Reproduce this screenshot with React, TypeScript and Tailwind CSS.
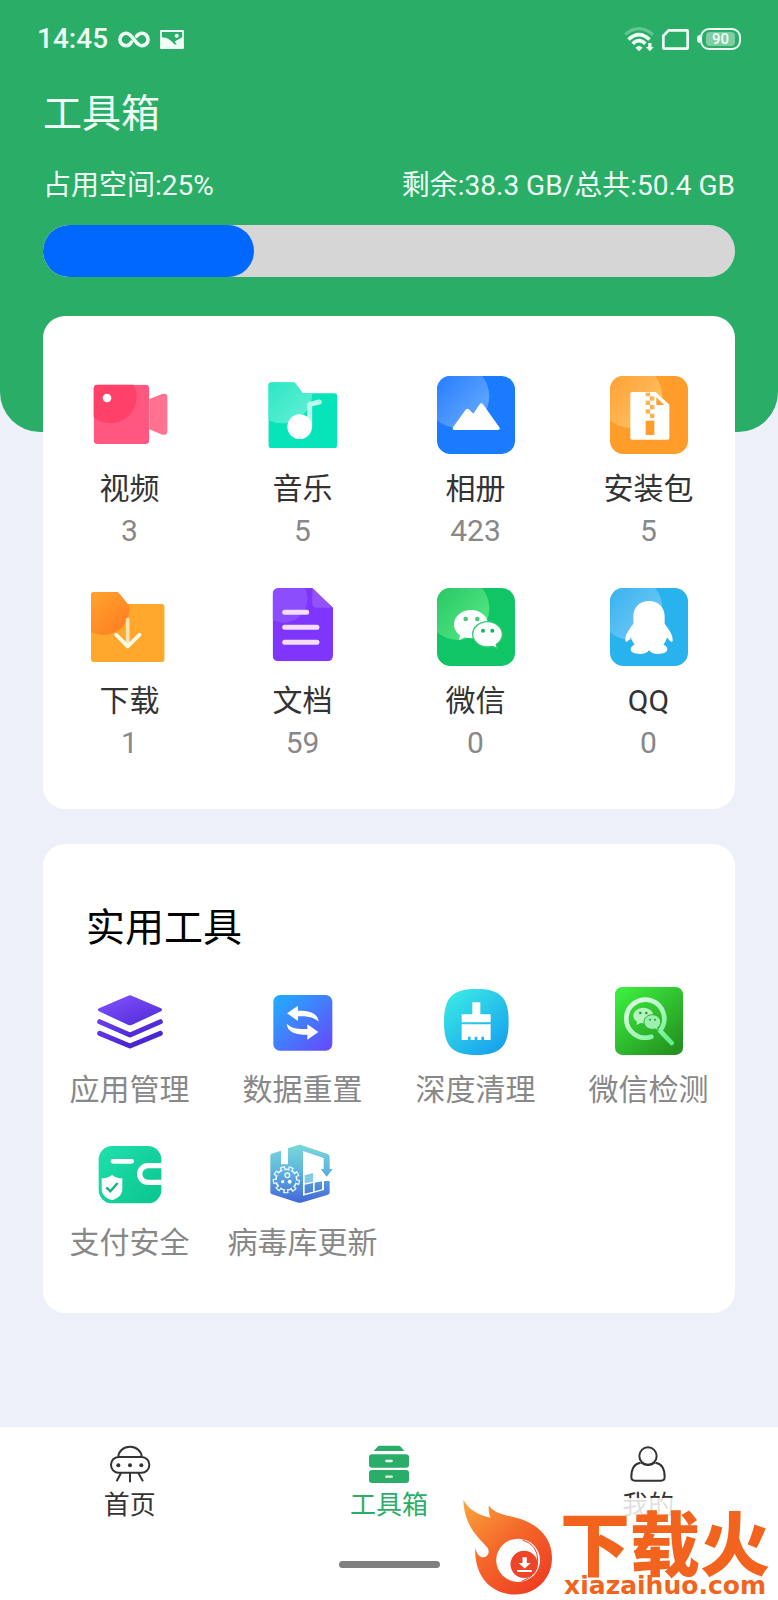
import type { ReactNode } from 'react'

function InfinityIcon() {
  return (
    <svg viewBox="0 0 96 52" className="w-8 h-[17px]" fill="none" stroke="currentColor" strokeWidth="11" strokeLinecap="round">
      <path d="M40 34C36 41 31 45 24 45a19 19 0 0 1 0-38C44 7 52 45 72 45a19 19 0 0 0 0-38c-7 0-12 4-16 9" />
    </svg>
  )
}

function ScreenshotIcon() {
  return (
    <svg viewBox="0 0 70 56" className="w-6 h-[19px]">
      <path
        fill="currentColor"
        fillRule="evenodd"
        d="M3 0h64q3 0 3 3v50q0 3-3 3H3q-3 0-3-3V3Q0 0 3 0ZM5 6v15c15 0 27 8 38 22l6 0-6-9 22-13V6ZM49 11a6 6 0 1 1 0 12 6 6 0 0 1 0-12Z"
      />
    </svg>
  )
}

function WifiIcon() {
  return (
    <svg viewBox="0 0 90 76" className="w-[30px] h-[25px]" fill="none" stroke="currentColor">
      <path d="M3 23Q45-13 87 23" strokeWidth="9" opacity=".3" />
      <path d="M13 38Q45 8 77 38" strokeWidth="11" />
      <path d="M26 51Q45 32 64 51" strokeWidth="11" />
      <path d="M34 63q11-10 22 0L45 74Z" fill="currentColor" stroke="none" />
      <path d="M73 49h10v12h7L78 74 66 61h7Z" fill="currentColor" stroke="none" />
    </svg>
  )
}

function SimIcon() {
  return (
    <svg viewBox="0 0 80 62" className="w-[27px] h-[21px]" fill="none" stroke="currentColor" strokeWidth="8">
      <path d="M20 4h54q2 0 2 2v50q0 2-2 2H6q-2 0-2-2V20Z" />
    </svg>
  )
}

function Battery({ level }: { level: number }) {
  return (
    <div className="flex items-center">
      <div className="w-[3px] h-2 rounded-l-full bg-current" />
      <div className="flex w-[41px] h-[22px] px-1 py-0.5 rounded-[9px] border-2 border-current">
        <div className="flex flex-1 items-center justify-center rounded-sm bg-white/40 text-[15px] leading-none font-medium">
          {level}
        </div>
      </div>
    </div>
  )
}

function VideoIcon() {
  return (
    <svg viewBox="0 0 234 234" className="size-[78px]">
      <clipPath id="video-body">
        <rect x="8" y="26" width="167" height="178" rx="12" />
      </clipPath>
      <path d="M175 69 214 54q15-3 15 9v103q0 13-15 10l-39-16Z" fill="#ff7290" />
      <g clipPath="url(#video-body)">
        <rect x="8" y="26" width="167" height="178" fill="#ff5780" />
        <circle cx="58" cy="63" r="79" fill="#ff4169" />
      </g>
      <circle cx="48" cy="66" r="13" fill="#fff" />
    </svg>
  )
}

function MusicIcon() {
  return (
    <svg viewBox="0 0 234 234" className="size-[78px]">
      <defs>
        <linearGradient id="music-glow" x1="0" y1="0" x2="1" y2="1">
          <stop offset=".2" stopColor="#22e5c0" />
          <stop offset="1" stopColor="#68f0d8" />
        </linearGradient>
        <clipPath id="music-folder">
          <path d="M23 19h65q4 0 7 4l21 29h94q10 0 10 10v144q0 10-10 10H23q-10 0-10-10V29q0-10 10-10Z" />
        </clipPath>
      </defs>
      <g clipPath="url(#music-folder)">
        <rect width="234" height="234" fill="#08e4b9" />
        <circle cx="54" cy="51" r="91" fill="url(#music-glow)" />
      </g>
      <path d="M137 150V85l29-7" fill="none" stroke="#b9f8eb" strokeWidth="15" strokeLinecap="round" strokeLinejoin="round" />
      <circle cx="107" cy="152" r="37" fill="#fff" />
    </svg>
  )
}

type TileProps = { id: string; base: string; from: string; to: string; children: ReactNode }

// Rounded app tile with the light disc in its upper left corner
function Tile({ id, base, from, to, children }: TileProps) {
  return (
    <svg viewBox="0 0 234 234" className="size-[78px]">
      <defs>
        <linearGradient id={`${id}-glow`} x1="0" y1="0.1" x2="0.9" y2="0.9">
          <stop offset=".25" stopColor={from} />
          <stop offset="1" stopColor={to} />
        </linearGradient>
        <clipPath id={`${id}-tile`}>
          <rect width="234" height="234" rx="40" />
        </clipPath>
      </defs>
      <g clipPath={`url(#${id}-tile)`}>
        <rect width="234" height="234" fill={base} />
        <circle cx="62" cy="61" r="95" fill={`url(#${id}-glow)`} />
      </g>
      {children}
    </svg>
  )
}

function AlbumIcon() {
  return (
    <Tile id="album" base="#1b7bff" from="#2e82ff" to="#64aaff">
      <path
        d="M48 154 86 101q5-6 11 0l12 12 18-27q6-8 12 0l48 68q4 8-5 8H53q-9 0-5-8Z"
        fill="#fff"
      />
    </Tile>
  )
}

function PackageIcon() {
  return (
    <Tile id="package" base="#ff9d2a" from="#ffa43a" to="#ffc468">
      <path d="M67 48h70l41 38v99q0 6-6 6H67q-6 0-6-6V54q0-6 6-6Z" fill="#fff" />
      <path d="M139 64v23h24Z" fill="#ffa035" />
      <g fill="#ffb14d">
        <rect x="107" y="50" width="13" height="11" />
        <rect x="120" y="61" width="13" height="13" />
        <rect x="107" y="74" width="13" height="13" />
        <rect x="120" y="87" width="13" height="13" />
        <rect x="107" y="100" width="13" height="13" />
        <rect x="120" y="113" width="13" height="13" />
      </g>
      <rect x="107" y="134" width="26" height="43" fill="#ff9d2a" />
    </Tile>
  )
}

function DownloadIcon() {
  return (
    <svg viewBox="0 0 234 234" className="size-[78px]">
      <defs>
        <linearGradient id="download-glow" x1="0.2" y1="0.1" x2="0.9" y2="0.9">
          <stop offset=".2" stopColor="#ff9f2c" />
          <stop offset="1" stopColor="#ff7f22" />
        </linearGradient>
        <clipPath id="download-folder">
          <path d="M10 12h66q5 0 8 4l26 32h101q10 0 10 10v154q0 10-10 10H10q-10 0-10-10V22q0-10 10-10Z" />
        </clipPath>
      </defs>
      <g clipPath="url(#download-folder)">
        <rect width="234" height="234" fill="#ffa82b" />
        <circle cx="37" cy="63" r="78" fill="url(#download-glow)" />
      </g>
      <g fill="none" strokeWidth="11" strokeLinecap="round" strokeLinejoin="round">
        <path d="M110 95v76" stroke="#ffe3b5" />
        <path d="m75 140 35 35 36-35" stroke="#fffbe8" />
      </g>
    </svg>
  )
}

function DocumentIcon() {
  return (
    <svg viewBox="0 0 234 234" className="size-[78px]">
      <clipPath id="doc-page">
        <path d="M46 0h99l62 59v141q0 20-20 20H46q-20 0-20-20V20Q26 0 46 0Z" />
      </clipPath>
      <g clipPath="url(#doc-page)">
        <rect width="234" height="234" fill="#7f35fb" />
        <circle cx="58" cy="32" r="72" fill="#8c4dfc" />
        <path d="M145 0v45q0 14 14 14h48Z" fill="#9452fb" />
      </g>
      <path d="M62 73h66M62 118h97M62 163h97" stroke="#f4dcff" strokeWidth="15" strokeLinecap="round" />
    </svg>
  )
}

function WechatIcon() {
  return (
    <Tile id="wechat" base="#0fc565" from="#2dcc69" to="#55e684">
      <path d="M102 66c-28 0-51 19-51 43 0 13 7 25 18 33l-3 15 18-9c6 2 12 3 18 3 28 0 51-18 51-42s-23-43-51-43Z" fill="#fff" />
      <circle cx="86" cy="93" r="7" fill="#3fcb78" />
      <circle cx="121" cy="93" r="7" fill="#3fcb78" />
      <path
        d="M152 101c-25 0-45 17-45 38s20 38 45 38c5 0 10-1 15-2l14 7-3-13c11-7 18-17 18-30 0-21-20-38-44-38Z"
        fill="#fff"
        stroke="#2fcb70"
        strokeWidth="4"
      />
      <circle cx="138" cy="128" r="6" fill="#0fb85d" />
      <circle cx="166" cy="128" r="6" fill="#0fb85d" />
    </Tile>
  )
}

function QQIcon() {
  return (
    <Tile id="qq" base="#29b3ee" from="#3fb5f0" to="#74cbf5">
      <path
        d="M117 39c-29 0-47 20-47 46v22c-14 19-25 35-24 50 1 9 7 5 17-9 2 9 6 16 11 22-8 3-12 8-12 14 0 9 12 14 28 14 13 0 23-4 27-11 4 7 14 11 27 11 16 0 28-5 28-14 0-6-4-11-12-14 5-6 9-13 11-22 10 14 16 18 17 9 1-15-10-31-24-50V85c0-26-18-46-47-46Z"
        fill="#fff"
      />
    </Tile>
  )
}

function LayersIcon() {
  return (
    <svg viewBox="0 0 204 204" className="size-[68px]">
      <defs>
        <linearGradient id="layers" x1="0" y1="25" x2="60" y2="183" gradientUnits="userSpaceOnUse">
          <stop offset="0" stopColor="#8354ff" />
          <stop offset="1" stopColor="#4b25d2" />
        </linearGradient>
      </defs>
      <path d="M97 26q5-2 10 0l88 38q6 4 0 9l-88 41q-5 2-10 0L9 73q-7-5 0-9Z" fill="url(#layers)" />
      <path
        d="m11 104 91 40 91-40M11 139l91 38 91-38"
        fill="none"
        stroke="url(#layers)"
        strokeWidth="15"
        strokeLinecap="round"
        strokeLinejoin="round"
      />
    </svg>
  )
}

function ResetIcon() {
  return (
    <svg viewBox="0 0 204 204" className="size-[68px]">
      <defs>
        <linearGradient id="reset" x1="0" y1="0" x2="1" y2="1">
          <stop offset=".1" stopColor="#25a6ff" />
          <stop offset=".9" stopColor="#6250fb" />
        </linearGradient>
      </defs>
      <rect x="13" y="24" width="177" height="167" rx="20" fill="url(#reset)" />
      <path id="reset-arrow" d="m54 79 33-23v15c36 0 59 7 62 33-14-13-31-17-62-16v14Z" fill="#fff" />
      <use href="#reset-arrow" transform="rotate(180 101 107)" />
    </svg>
  )
}

function CleanIcon() {
  return (
    <svg viewBox="0 0 204 204" className="size-[68px]">
      <defs>
        <linearGradient id="clean" x1="0" y1="0" x2=".8" y2="1">
          <stop offset="0" stopColor="#3bf0e4" />
          <stop offset="1" stopColor="#18a0ee" />
        </linearGradient>
      </defs>
      <path d="M103 6c72 0 97 25 97 99s-25 99-97 99S6 179 6 105 31 6 103 6Z" fill="url(#clean)" />
      <path d="M91 46h24v36h31v24H59V82h32Z" fill="#fff" />
      <path d="M59 112h87v47h-20v-10h-8v10h-12v-10h-8v10H86v-10h-8v10H59Z" fill="#fff" />
    </svg>
  )
}

function WechatScanIcon() {
  return (
    <svg viewBox="0 0 204 204" className="size-[68px]">
      <defs>
        <linearGradient id="scan" x1="0" y1="0" x2=".8" y2="1">
          <stop offset=".1" stopColor="#3bea3e" />
          <stop offset="1" stopColor="#259220" />
        </linearGradient>
        <linearGradient id="scan-ring" x1="0" y1="0" x2="1" y2="1">
          <stop offset=".2" stopColor="#d3fbd9" />
          <stop offset="1" stopColor="#5cf087" />
        </linearGradient>
      </defs>
      <rect width="204" height="204" rx="22" fill="url(#scan)" />
      <path
        d="M109 149a57 57 0 1 1 26-18l35 37"
        fill="none"
        stroke="url(#scan-ring)"
        strokeWidth="14"
        strokeLinecap="round"
        strokeLinejoin="round"
      />
      <path d="M85 62c-17 0-30 11-30 24 0 8 4 14 11 18l-2 10 12-6 9 1c17 0 30-10 30-23S102 62 85 62Z" fill="#b5f3bf" />
      <path
        d="M112 83c-14 0-25 10-25 22s11 22 25 22l8-1 10 5-2-9c6-4 9-10 9-17 0-12-11-22-25-22Z"
        fill="#9cf0ae"
        stroke="#2fb32f"
        strokeWidth="3"
      />
      <g fill="#2a9c2a">
        <circle cx="76" cy="78" r="4" />
        <circle cx="94" cy="78" r="4" />
        <circle cx="105" cy="98" r="3" />
        <circle cx="120" cy="98" r="3" />
      </g>
    </svg>
  )
}

function PayIcon() {
  return (
    <svg viewBox="0 0 204 204" className="size-[68px]">
      <defs>
        <linearGradient id="pay" x1="0" y1="0" x2="1" y2="1">
          <stop offset="0" stopColor="#1fe0ac" />
          <stop offset="1" stopColor="#0bc48e" />
        </linearGradient>
      </defs>
      <rect x="8" y="18" width="188" height="172" rx="40" fill="url(#pay)" />
      <path d="M51 64h56" stroke="#fff" strokeWidth="14" strokeLinecap="round" />
      <path d="M204 77h-48a25 25 0 0 0 0 50h48" fill="none" stroke="#fff" strokeWidth="16" />
      <path d="M48 104c9 8 19 11 31 11v32c0 18-14 28-31 34-17-6-31-16-31-34v-32c12 0 22-3 31-11Z" fill="#fff" />
      <path d="m31 142 12 12 22-25" fill="none" stroke="#12b386" strokeWidth="7" />
    </svg>
  )
}

function VirusIcon() {
  return (
    <svg viewBox="0 0 204 204" className="size-[68px]">
      <defs>
        <linearGradient id="virus" x1="0" y1="14" x2="0" y2="190" gradientUnits="userSpaceOnUse">
          <stop offset="0" stopColor="#79d9d8" />
          <stop offset=".45" stopColor="#5fb4de" />
          <stop offset="1" stopColor="#4264d8" />
        </linearGradient>
      </defs>
      <path
        d="M8 41 36 32v41h21V25l31-10q4-2 8 0l80 27q6 2 6 8v37h9l-18 23-18-23h9V54l-62-21v134l63-17v-27h17v34q0 5-5 7l-81 24q-4 1-8 0L9 163q-5-2-5-7V47q0-5 4-6Z"
        fill="url(#virus)"
      />
      <path d="m107 106 25-7v26l-25 5Z" fill="#83cbe2" />
      <path d="m107 134 25-5v26l-25 6ZM137 128l22-4v24l-22 6Z" fill="url(#virus)" />
      <g fill="none" stroke="#f0fbff">
        <circle cx="52" cy="119" r="30" strokeWidth="7" />
        <circle cx="52" cy="119" r="36" strokeWidth="10" strokeDasharray="15 10" />
      </g>
      <circle cx="52" cy="119" r="29" fill="url(#virus)" />
      <circle
        cx="52"
        cy="119"
        r="33"
        fill="none"
        stroke="url(#virus)"
        strokeWidth="9"
        strokeDasharray="7 16"
        strokeDashoffset="-3"
      />
      <circle cx="55" cy="106" r="7" fill="none" stroke="#f0fbff" strokeWidth="4" />
      <circle cx="41" cy="125" r="5" fill="#f0fbff" />
      <circle cx="62" cy="125" r="6" fill="#f0fbff" />
    </svg>
  )
}

function HomeIcon() {
  return (
    <svg viewBox="0 0 126 114" className="w-[42px] h-[38px]" fill="none" stroke="currentColor" strokeWidth="6">
      <path d="M28 36a35 31 0 0 1 70 0" />
      <rect x="6" y="36" width="115" height="47" rx="23" />
      <path d="M36 84 23 109M63 84v28M88 84l14 25" />
      <g fill="currentColor" stroke="none">
        <circle cx="28" cy="61" r="6" />
        <circle cx="63" cy="61" r="6" />
        <circle cx="97" cy="61" r="6" />
      </g>
    </svg>
  )
}

function ToolboxIcon() {
  return (
    <svg viewBox="0 0 126 114" className="w-[42px] h-[38px]" fill="currentColor">
      <path d="M34 2h58q4 0 7 4l10 12H17L28 6q3-4 6-4Z" />
      <rect x="3" y="28" width="120" height="40" rx="9" />
      <rect x="3" y="75" width="120" height="39" rx="9" />
      <path d="M55 48h16M55 95h16" stroke="#eafff0" strokeWidth="7" strokeLinecap="round" />
    </svg>
  )
}

function UserIcon() {
  return (
    <svg viewBox="0 0 126 114" className="w-[42px] h-[38px]" fill="none" stroke="currentColor" strokeWidth="6">
      <circle cx="63" cy="33" r="26" />
      <path d="M41 53C21 56 13 72 13 96q0 11 11 11h78q11 0 11-11c0-24-8-40-28-43" />
      <path d="M43 53q20 14 40 0" />
    </svg>
  )
}

function FlameLogo() {
  return (
    <svg viewBox="60 235 280 300" className="w-[93px] h-[100px] shrink-0">
      <defs>
        <linearGradient id="flame" x1="0" y1="0" x2=".8" y2="1">
          <stop offset="0" stopColor="#fba53c" />
          <stop offset=".5" stopColor="#f4682a" />
          <stop offset="1" stopColor="#ef3d22" />
        </linearGradient>
      </defs>
      <path
        d="M67 240c14 28 42 45 82 54-5-12-7-24-5-37 15 22 42 28 79 36 70 17 111 62 111 122 0 62-48 110-111 110-78 0-124-62-120-140 4 17 13 28 24 28 13 0 21-15 13-29C120 360 70 325 67 240Z"
        fill="url(#flame)"
      />
      <ellipse cx="232" cy="422" rx="66" ry="65" fill="#fff" />
      <path d="M245 361q46 14 46 61t-48 63" fill="none" stroke="#ee4529" strokeWidth="3" />
      <circle cx="250" cy="434" r="41" fill="#ee4427" />
      <path d="M245 413h13v17h12l-18 17-19-17h12ZM229 451h44v6h-44Z" fill="#fff" />
    </svg>
  )
}

const categories = [
  { name: '视频', count: 3, icon: <VideoIcon /> },
  { name: '音乐', count: 5, icon: <MusicIcon /> },
  { name: '相册', count: 423, icon: <AlbumIcon /> },
  { name: '安装包', count: 5, icon: <PackageIcon /> },
  { name: '下载', count: 1, icon: <DownloadIcon /> },
  { name: '文档', count: 59, icon: <DocumentIcon /> },
  { name: '微信', count: 0, icon: <WechatIcon /> },
  { name: 'QQ', count: 0, icon: <QQIcon /> },
]

const tools = [
  { name: '应用管理', icon: <LayersIcon /> },
  { name: '数据重置', icon: <ResetIcon /> },
  { name: '深度清理', icon: <CleanIcon /> },
  { name: '微信检测', icon: <WechatScanIcon /> },
  { name: '支付安全', icon: <PayIcon /> },
  { name: '病毒库更新', icon: <VirusIcon /> },
]

const tabs = [
  { name: '首页', icon: <HomeIcon />, active: false },
  { name: '工具箱', icon: <ToolboxIcon />, active: true },
  { name: '我的', icon: <UserIcon />, active: false },
]

export default function App() {
  return (
    <div className="flex flex-col min-h-screen bg-[#edf0f9] font-[Roboto,'Noto_Sans_CJK_SC',sans-serif] text-[#333]">
      <header className="rounded-b-[40px] bg-[#2aae67] px-[43px] pb-[155px] text-[#f0fff6]">
        <div className="-mx-1.5 flex h-[78px] items-center justify-between">
          <div className="flex items-center gap-2.5">
            <span className="text-[28px] leading-none font-medium">14:45</span>
            <InfinityIcon />
            <ScreenshotIcon />
          </div>
          <div className="flex items-center gap-2">
            <WifiIcon />
            <SimIcon />
            <Battery level={90} />
          </div>
        </div>

        <h1 className="mt-2 text-[39px] leading-14">工具箱</h1>

        <div className="mt-6 flex justify-between text-[28px] leading-10">
          <span>占用空间:25%</span>
          <span>剩余:38.3 GB/总共:50.4 GB</span>
        </div>
        <div className="mt-[19px] h-[52px] overflow-hidden rounded-full bg-[#d6d6d6]">
          <div className="h-full w-[30.5%] rounded-full bg-[#0068ff]" />
        </div>
      </header>

      <main className="-mt-[116px] flex flex-1 flex-col gap-[35px] px-[43px] pb-24">
        <section className="grid grid-cols-4 gap-y-9 rounded-[22px] bg-white pt-[60px] pb-[45px]">
          {categories.map(({ name, count, icon }) => (
            <button key={name} type="button" className="flex flex-col items-center text-[30px] leading-[42px]">
              {icon}
              <span className="mt-3.5">{name}</span>
              <span className="text-[#888]">{count}</span>
            </button>
          ))}
        </section>

        <section className="rounded-[22px] bg-white pt-14 pb-[49px]">
          <h2 className="px-[43px] text-[39px] leading-14 text-black">实用工具</h2>
          <div className="mt-[31px] grid grid-cols-4 gap-y-[29px]">
            {tools.map(({ name, icon }) => (
              <button key={name} type="button" className="flex flex-col items-center text-[30px] leading-[42px] text-[#888]">
                {icon}
                <span className="mt-3.5 whitespace-nowrap">{name}</span>
              </button>
            ))}
          </div>
        </section>
      </main>

      <footer className="relative bg-white pt-[18px] pb-8">
        <nav className="grid grid-cols-3">
          {tabs.map(({ name, icon, active }) => (
            <a
              key={name}
              href="#"
              className={`flex flex-col items-center gap-1 text-[26px] leading-9 ${active ? 'text-[#2aae67]' : 'text-[#333]'}`}
            >
              {icon}
              {name}
            </a>
          ))}
        </nav>
        <div className="mx-auto mt-[38px] h-[7px] w-[101px] rounded-full bg-[#808080]" />

        <div className="absolute right-0 bottom-0 flex h-[102px] items-start gap-1.5 bg-white/85 pr-2">
          <FlameLogo />
          <div className="flex flex-col items-center pt-3 text-[#f2641e]">
            <span className="font-['Noto_Sans_CJK_SC',sans-serif] text-[70px] leading-[62px] font-black">下载火</span>
            <span className="font-['DejaVu_Sans',sans-serif] text-[25px] leading-7 font-bold">xiazaihuo.com</span>
          </div>
        </div>
      </footer>
    </div>
  )
}
